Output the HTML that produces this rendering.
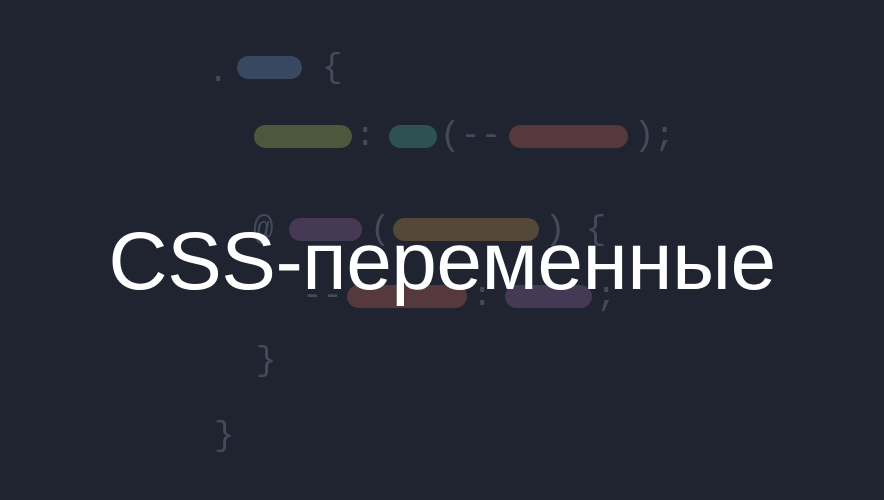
<!DOCTYPE html><html><head><style>
body{margin:0;width:884px;height:500px;background:#1f2430;position:relative;overflow:hidden;font-family:"Liberation Mono",monospace}
.p{position:absolute;height:23px;border-radius:12px}
.g{position:absolute;color:#434b5b;font-size:34px;line-height:34px}
.t{position:absolute;left:0;width:884px;top:214px;text-align:center;color:#fff;font-family:"Liberation Sans",sans-serif;font-size:82px;line-height:96px;letter-spacing:-0.5px}
</style></head><body>
<div class="g" style="left:208px;top:56px">.</div>
<div class="p" style="left:237px;top:56px;width:65px;background:#384860"></div>
<div class="g" style="left:322px;top:52px">{</div>
<div class="p" style="left:254px;top:125px;width:98px;background:#4b583b"></div>
<div class="g" style="left:355px;top:120px">:</div>
<div class="p" style="left:389px;top:125px;width:48px;background:#2e5253"></div>
<div class="g" style="left:440px;top:120px">(--</div>
<div class="p" style="left:509px;top:125px;width:119px;background:#56393d"></div>
<div class="g" style="left:634px;top:120px">);</div>
<div class="g" style="left:253px;top:214px">@</div>
<div class="p" style="left:289px;top:218px;width:73px;background:#463956"></div>
<div class="g" style="left:370px;top:214px">(</div>
<div class="p" style="left:393px;top:218px;width:146px;background:#564838"></div>
<div class="g" style="left:545px;top:214px">) {</div>
<div class="g" style="left:302px;top:280px">--</div>
<div class="p" style="left:347px;top:285px;width:120px;background:#56393d"></div>
<div class="g" style="left:472px;top:280px">:</div>
<div class="p" style="left:505px;top:285px;width:87px;background:#463956"></div>
<div class="g" style="left:596px;top:280px">;</div>
<div class="g" style="left:256px;top:345px">}</div>
<div class="g" style="left:214px;top:420px">}</div>
<div class="t">CSS-переменные</div>
</body></html>
